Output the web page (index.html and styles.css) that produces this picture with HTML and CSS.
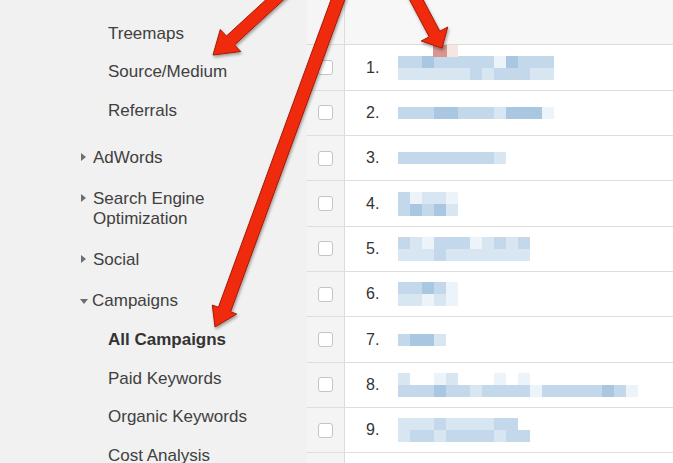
FILE: index.html
```html
<!DOCTYPE html>
<html>
<head>
<meta charset="utf-8">
<link rel="stylesheet" href="styles.css">
</head>
<body>
<div class="page">
  <nav class="sidebar">
    <ul class="sub first">
      <li>Treemaps</li>
      <li>Source/Medium</li>
      <li>Referrals</li>
    </ul>
    <div class="item"><span class="tri-r"></span><span>AdWords</span></div>
    <div class="item"><span class="tri-r"></span><span>Search Engine<br>Optimization</span></div>
    <div class="item"><span class="tri-r"></span><span>Social</span></div>
    <div class="item"><span class="tri-d"></span><span>Campaigns</span></div>
    <ul class="sub">
      <li class="active">All Campaigns</li>
      <li>Paid Keywords</li>
      <li>Organic Keywords</li>
      <li>Cost Analysis</li>
    </ul>
  </nav>
  <main class="table">
    <div class="thead"><div class="cb"></div><div class="hcell"></div></div>
    <div class="row"><div class="cb"><span class="box"></span></div><div class="num">1.</div>
      <div class="blur"><div class="ln"><i class="s3"></i><i class="s3"></i><i class="s4"></i><i class="s3"></i><i class="s3"></i><i class="s3"></i><i class="s3"></i><i class="s3"></i><i class="s1"></i><i class="s4"></i><i class="s3"></i><i class="s3"></i><i class="s3"></i></div>
      <div class="ln"><i class="s2"></i><i class="s2"></i><i class="s2"></i><i class="s2"></i><i class="s2"></i><i class="s2"></i><i class="s3"></i><i class="s2"></i><i class="s3"></i><i class="s3"></i><i class="s3"></i><i class="s2"></i><i class="s2"></i></div></div>
    </div>
    <div class="row"><div class="cb"><span class="box"></span></div><div class="num">2.</div>
      <div class="blur"><div class="ln"><i class="s3"></i><i class="s3"></i><i class="s3"></i><i class="s4"></i><i class="s4"></i><i class="s3"></i><i class="s3"></i><i class="s3"></i><i class="s2"></i><i class="s4"></i><i class="s4"></i><i class="s4"></i><i class="s1"></i></div></div>
    </div>
    <div class="row"><div class="cb"><span class="box"></span></div><div class="num">3.</div>
      <div class="blur"><div class="ln"><i class="s3"></i><i class="s3"></i><i class="s3"></i><i class="s3"></i><i class="s3"></i><i class="s3"></i><i class="s3"></i><i class="s3"></i><i class="s2"></i></div></div>
    </div>
    <div class="row"><div class="cb"><span class="box"></span></div><div class="num">4.</div>
      <div class="blur"><div class="ln"><i class="s3"></i><i class="s1"></i><i class="s2"></i><i class="s2"></i><i class="s1"></i></div>
      <div class="ln"><i class="s3"></i><i class="s4"></i><i class="s3"></i><i class="s4"></i><i class="s2"></i></div></div>
    </div>
    <div class="row"><div class="cb"><span class="box"></span></div><div class="num">5.</div>
      <div class="blur"><div class="ln"><i class="s3"></i><i class="s2"></i><i class="s1"></i><i class="s3"></i><i class="s3"></i><i class="s3"></i><i class="s1"></i><i class="s2"></i><i class="s3"></i><i class="s2"></i><i class="s3"></i></div>
      <div class="ln"><i class="s2"></i><i class="s2"></i><i class="s2"></i><i class="s3"></i><i class="s2"></i><i class="s2"></i><i class="s2"></i><i class="s2"></i><i class="s2"></i><i class="s2"></i><i class="s2"></i></div></div>
    </div>
    <div class="row"><div class="cb"><span class="box"></span></div><div class="num">6.</div>
      <div class="blur"><div class="ln"><i class="s3"></i><i class="s3"></i><i class="s4"></i><i class="s3"></i><i class="s1"></i></div>
      <div class="ln"><i class="s2"></i><i class="s2"></i><i class="s1"></i><i class="s2"></i><i class="s1"></i></div></div>
    </div>
    <div class="row"><div class="cb"><span class="box"></span></div><div class="num">7.</div>
      <div class="blur"><div class="ln"><i class="s3"></i><i class="s4"></i><i class="s4"></i><i class="s2"></i></div></div>
    </div>
    <div class="row"><div class="cb"><span class="box"></span></div><div class="num">8.</div>
      <div class="blur"><div class="ln"><i class="s2"></i><i class="s0"></i><i class="s0"></i><i class="s1"></i><i class="s2"></i><i class="s0"></i><i class="s0"></i><i class="s0"></i><i class="s1"></i><i class="s0"></i><i class="s1"></i><i class="s0"></i><i class="s0"></i><i class="s0"></i><i class="s0"></i><i class="s0"></i><i class="s0"></i><i class="s0"></i><i class="s0"></i><i class="s0"></i></div>
      <div class="ln"><i class="s3"></i><i class="s3"></i><i class="s3"></i><i class="s4"></i><i class="s3"></i><i class="s3"></i><i class="s2"></i><i class="s3"></i><i class="s3"></i><i class="s3"></i><i class="s3"></i><i class="s1"></i><i class="s3"></i><i class="s3"></i><i class="s3"></i><i class="s3"></i><i class="s3"></i><i class="s4"></i><i class="s3"></i><i class="s1"></i></div></div>
    </div>
    <div class="row"><div class="cb"><span class="box"></span></div><div class="num">9.</div>
      <div class="blur"><div class="ln"><i class="s2"></i><i class="s2"></i><i class="s2"></i><i class="s3"></i><i class="s2"></i><i class="s2"></i><i class="s2"></i><i class="s2"></i><i class="s3"></i><i class="s3"></i><i class="s0"></i></div>
      <div class="ln"><i class="s2"></i><i class="s3"></i><i class="s3"></i><i class="s2"></i><i class="s3"></i><i class="s3"></i><i class="s3"></i><i class="s3"></i><i class="s2"></i><i class="s3"></i><i class="s3"></i></div></div>
    </div>
    <div class="row"><div class="cb"></div><div class="num"></div></div>
  </main>
  <svg class="arrows" width="673" height="463" viewBox="0 0 673 463" xmlns="http://www.w3.org/2000/svg">
    <defs>
      <filter id="sh" x="-20%" y="-20%" width="140%" height="140%">
        <feDropShadow dx="1" dy="2" stdDeviation="1.4" flood-color="#000" flood-opacity="0.35"/>
      </filter>
    </defs>
    <rect x="433" y="45" width="14" height="12" fill="#d9958e"/>
    <rect x="447" y="45" width="11" height="12" fill="#f6e6e2"/>
    <g filter="url(#sh)" fill="#f02a0e" stroke="#a41a06" stroke-width="1" stroke-linejoin="round">
      <polygon points="213,55 240.7,51.5 234.6,44.9 289.8,-5.9 281.6,-14.7 226.4,36.1 220.3,29.5"/>
      <polygon points="215,327 236.7,314 230.6,311.7 345.8,-2.9 333.6,-7.3 218.4,307.3 212.3,305"/>
      <polygon points="442,48.1 447.8,27 439.8,31.2 418.7,-8.6 408.1,-3 429.2,36.8 421.2,41"/>
    </g>
  </svg>
</div>
</body>
</html>
```

FILE: styles.css
```css
html, body {
  margin: 0;
  padding: 0;
}
body {
  width: 673px;
  height: 463px;
  overflow: hidden;
  font-family: "Liberation Sans", Arial, Helvetica, sans-serif;
  background: #ffffff;
}
.page {
  position: relative;
  display: flex;
  width: 673px;
  height: 463px;
  overflow: hidden;
}
.sidebar {
  width: 307px;
  flex: none;
  background: #f1f1f1;
  padding-top: 14.5px;
  box-sizing: border-box;
  color: #404040;
  font-size: 17px;
  line-height: 20px;
}
.sub {
  list-style: none;
  margin: 0;
  padding: 0;
}
.sub.first {
  margin-bottom: 7px;
}
.sub li {
  padding: 9.25px 0 9.25px 108px;
  white-space: nowrap;
}
.sub li.active {
  font-weight: bold;
  color: #333;
}
.item {
  display: flex;
  align-items: flex-start;
  padding: 10.5px 0 10.5px 81px;
  white-space: nowrap;
}
.tri-r {
  width: 0;
  height: 0;
  border-top: 4.5px solid transparent;
  border-bottom: 4.5px solid transparent;
  border-left: 5px solid #6e6e6e;
  margin: 5.5px 7px 0 0;
  flex: none;
}
.tri-d {
  width: 0;
  height: 0;
  border-left: 4.5px solid transparent;
  border-right: 4.5px solid transparent;
  border-top: 5.5px solid #6e6e6e;
  margin: 8.5px 4px 0 -1px;
  flex: none;
}
.table {
  flex: 1;
  display: flex;
  flex-direction: column;
  background: #fff;
}
.thead {
  display: flex;
  height: 45.4px;
  flex: none;
  box-sizing: border-box;
  border-bottom: 1px solid #dcdcdc;
  background: #f7f7f7;
}
.thead .cb {
  background: #f5f5f5;
}
.hcell {
  flex: 1;
}
.row {
  display: flex;
  align-items: stretch;
  height: 45.33px;
  flex: none;
  box-sizing: border-box;
  border-bottom: 1px solid #dedede;
}
.cb {
  width: 38px;
  flex: none;
  box-sizing: border-box;
  background: #f4f4f4;
  border-right: 1px solid #dcdcdc;
  display: flex;
  align-items: center;
  justify-content: center;
}
.box {
  width: 15px;
  height: 15px;
  box-sizing: border-box;
  border: 1px solid #c4c4c4;
  border-radius: 3px;
  background: #fff;
}
.num {
  width: 53px;
  flex: none;
  box-sizing: border-box;
  padding-left: 21px;
  display: flex;
  align-items: center;
  font-size: 16px;
  color: #333;
}
.blur {
  display: flex;
  flex-direction: column;
  justify-content: center;
}
.ln {
  display: flex;
  height: 12px;
}
.ln i {
  display: block;
  width: 12px;
  height: 12px;
}
.s0 { background: transparent; }
.s1 { background: #ecf3f9; }
.s2 { background: #d8e6f1; }
.s3 { background: #c3d8ea; }
.s4 { background: #a9c7e0; }
.arrows {
  position: absolute;
  left: 0;
  top: 0;
  pointer-events: none;
}
```
